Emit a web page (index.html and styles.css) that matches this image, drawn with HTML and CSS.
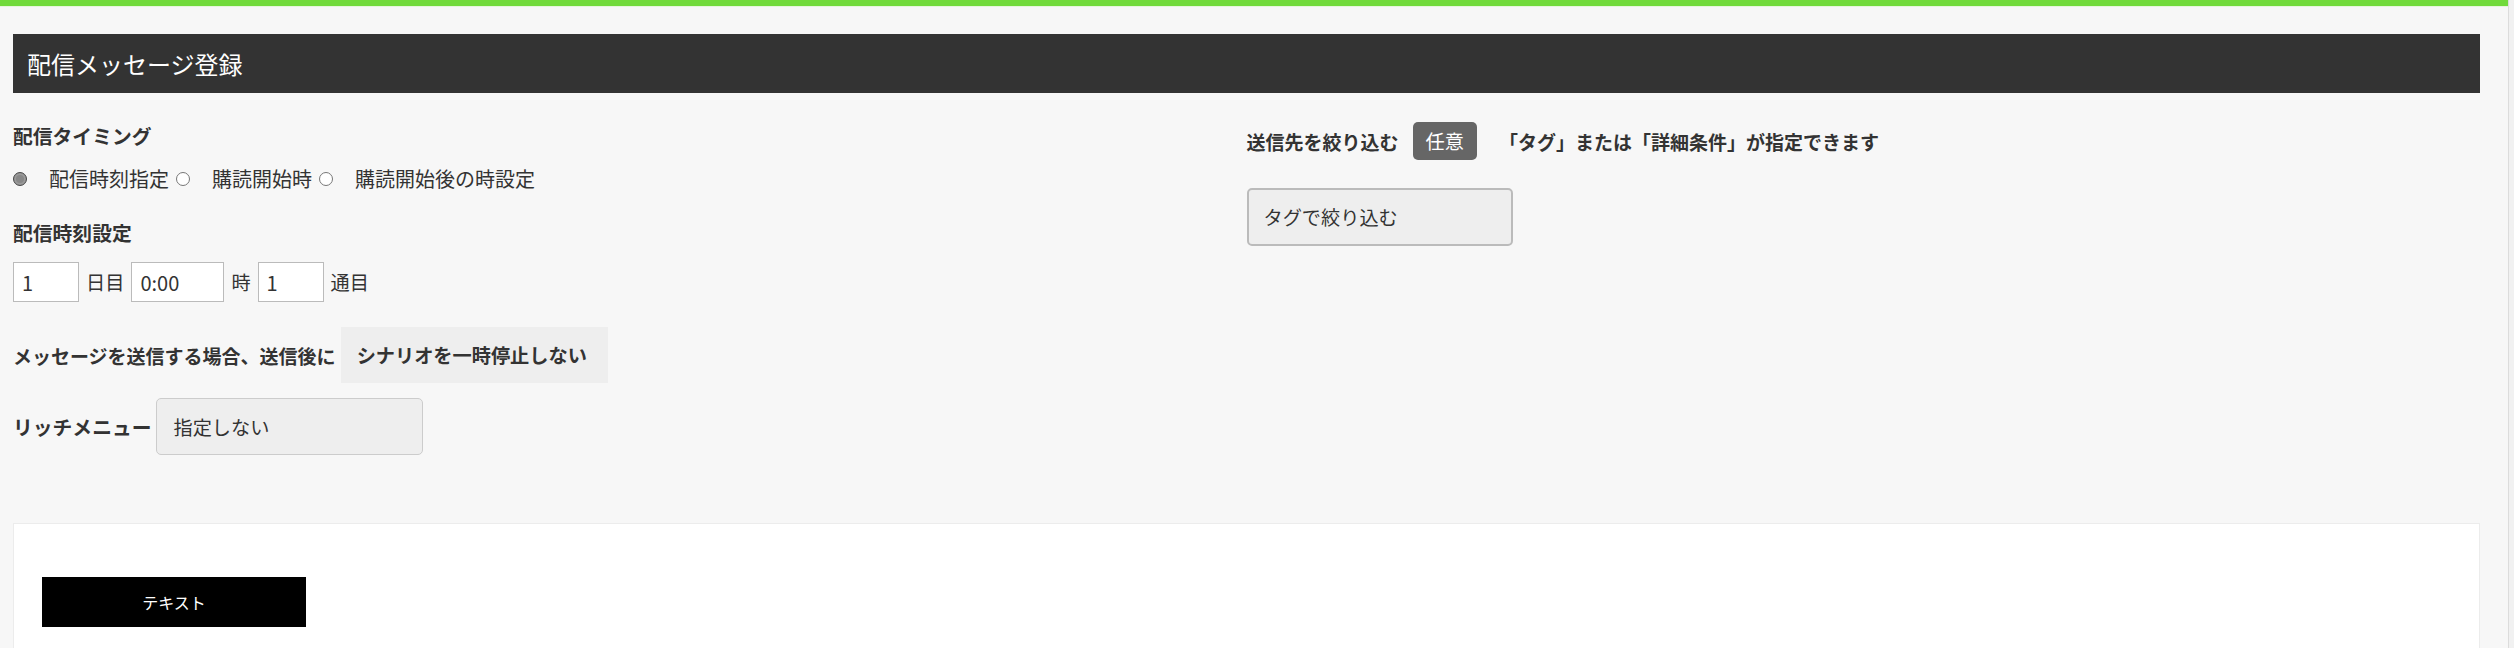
FILE: index.html
```html
<!DOCTYPE html>
<html lang="ja">
<head>
    <meta charset="UTF-8">
    <meta name="viewport" content="width=device-width, initial-scale=1.0">
    <title>配信メッセージ登録</title>
    <link rel="stylesheet" href="styles.css">
</head>
<body>
    <div class="app">
        <div class="page">
            <div class="topbar"></div>
            <div class="content">
                <h1 class="page-title">配信メッセージ登録</h1>

                <div class="form-cols">
                    <div class="col">
                        <div class="field-label">配信タイミング</div>
                        <div class="radio-row">
                            <label class="radio-item"><span class="radio checked"></span>配信時刻指定</label>
                            <label class="radio-item"><span class="radio"></span>購読開始時</label>
                            <label class="radio-item"><span class="radio"></span>購読開始後の時設定</label>
                        </div>

                        <div class="field-label spaced">配信時刻設定</div>
                        <div class="time-row">
                            <input class="text-input short" type="text" value="1">
                            <span>日目</span>
                            <input class="text-input mid" type="text" value="0:00">
                            <span>時</span>
                            <input class="text-input short" type="text" value="1">
                            <span>通目</span>
                        </div>

                        <div class="inline-field first">
                            <span class="field-label small">メッセージを送信する場合、送信後に</span>
                            <div class="select-box flat">シナリオを一時停止しない</div>
                        </div>
                        <div class="inline-field">
                            <span class="field-label">リッチメニュー</span>
                            <div class="select-box bordered">指定しない</div>
                        </div>
                    </div>

                    <div class="col">
                        <div class="filter-row">
                            <span class="field-label small">送信先を絞り込む</span>
                            <span class="badge">任意</span>
                            <span class="field-label small">「タグ」または「詳細条件」が指定できます</span>
                        </div>
                        <button class="tag-btn">タグで絞り込む</button>
                    </div>
                </div>

                <div class="panel">
                    <button class="type-btn">テキスト</button>
                </div>
            </div>
        </div>
        <div class="scrollbar"></div>
    </div>
</body>
</html>
```

FILE: styles.css
```css
* {
    margin: 0;
    padding: 0;
    box-sizing: border-box;
}

html, body {
    height: 100%;
}

body {
    font-family: "Noto Sans CJK JP", "Noto Sans", sans-serif;
    font-size: 19.2px;
    color: #333;
    background: #f7f7f7;
    overflow: hidden;
}

.app {
    display: flex;
    height: 100%;
}

.page {
    flex: 1;
    min-width: 0;
}

.scrollbar {
    width: 6px;
    background: #f1f1f1;
    border-left: 1px solid #dcdcdc;
}

.topbar {
    height: 7px;
    background: #71da3b;
    border-bottom: 1px solid #e6f5dc;
}

.content {
    padding: 27px 28px 0 13px;
}

.page-title {
    height: 59px;
    line-height: 59px;
    padding-left: 14px;
    background: #333;
    color: #fff;
    font-size: 24px;
    font-weight: normal;
}

.form-cols {
    display: grid;
    grid-template-columns: 1fr 1fr;
    margin-top: 28px;
}

.field-label {
    font-size: 19.8px;
    font-weight: bold;
    line-height: 29px;
    white-space: nowrap;
}

.field-label.small {
    font-size: 19px;
}

.field-label.spaced {
    margin-top: 25px;
}

.radio-row {
    display: flex;
    align-items: center;
    margin-top: 14px;
    line-height: 29px;
    font-size: 20px;
}

.radio-item {
    display: flex;
    align-items: center;
    margin-right: 7px;
}

.radio {
    width: 14px;
    height: 14px;
    border-radius: 50%;
    border: 1px solid #777;
    background: #fff;
    margin-right: 22px;
}

.radio.checked {
    border: 1px solid #4a4a4a;
    background: #888;
    box-shadow: inset 0 0 0 2px #9a9a9a;
}

.time-row {
    display: flex;
    align-items: center;
    gap: 7px;
    margin-top: 15px;
}

.text-input {
    height: 40px;
    border: 1px solid #bbb;
    background: #fff;
    font-family: inherit;
    font-size: 20px;
    color: #333;
    padding: 0 8px;
    outline: none;
}

.text-input.short {
    width: 66px;
}

.text-input.mid {
    width: 93px;
}

.inline-field {
    display: flex;
    align-items: center;
    gap: 5px;
    margin-top: 15px;
}

.inline-field.first {
    margin-top: 25px;
}

.select-box {
    width: 267px;
    height: 57px;
    display: flex;
    align-items: center;
    padding-left: 16px;
    background: #eee;
    white-space: nowrap;
}

.select-box.flat {
    font-weight: bold;
    height: 56px;
}

.select-box.bordered {
    border: 1px solid #ccc;
    border-radius: 5px;
}

.filter-row {
    display: flex;
    align-items: center;
    height: 38px;
    margin-top: 1px;
}

.badge {
    height: 38px;
    line-height: 38px;
    padding: 0 13px;
    margin-left: 14px;
    margin-right: 22px;
    background: #666;
    color: #fff;
    border-radius: 5px;
}

.tag-btn {
    display: block;
    width: 266px;
    height: 58px;
    margin-top: 28px;
    padding-left: 15px;
    text-align: left;
    background: #eee;
    border: 2px solid #bbb;
    border-radius: 5px;
    font-family: inherit;
    font-size: 19.2px;
    color: #333;
}

.panel {
    margin-top: 68px;
    height: 200px;
    background: #fff;
    border: 1px solid #ececec;
    padding: 53px 28px;
}

.type-btn {
    width: 264px;
    height: 50px;
    background: #000;
    color: #fff;
    border: none;
    font-family: inherit;
    font-size: 16px;
}
```
